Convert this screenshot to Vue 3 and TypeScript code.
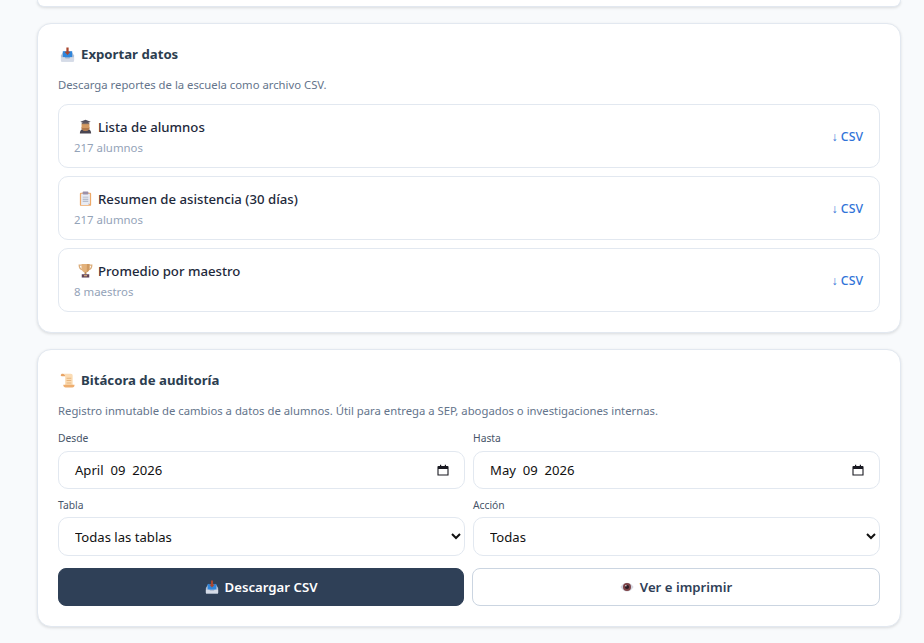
<script setup lang="ts">
type Report = { icon: string; title: string; sub: string }
const reports: Report[] = [
  { icon: 'student', title: 'Lista de alumnos', sub: '217 alumnos' },
  { icon: 'clipboard', title: 'Resumen de asistencia (30 días)', sub: '217 alumnos' },
  { icon: 'trophy', title: 'Promedio por maestro', sub: '8 maestros' },
]
</script>

<template>
  <main class="page">
    <div class="stub"></div>

    <section class="card">
      <h2 class="title">
        <svg class="emoji" viewBox="0 0 16 16"><use href="#i-inbox" /></svg>
        Exportar datos
      </h2>
      <p class="desc">Descarga reportes de la escuela como archivo CSV.</p>
      <div class="rows">
        <div v-for="r in reports" :key="r.title" class="row">
          <div>
            <div class="row-title">
              <svg class="emoji" viewBox="0 0 16 16"><use :href="'#i-' + r.icon" /></svg>
              <span>{{ r.title }}</span>
            </div>
            <div class="row-sub">{{ r.sub }}</div>
          </div>
          <a class="csv">↓ CSV</a>
        </div>
      </div>
    </section>

    <section class="card audit">
      <h2 class="title">
        <svg class="emoji" viewBox="0 0 16 16"><use href="#i-scroll" /></svg>
        Bitácora de auditoría
      </h2>
      <p class="desc">Registro inmutable de cambios a datos de alumnos. Útil para entrega a SEP, abogados o investigaciones internas.</p>
      <div class="form">
        <div class="field">
          <label>Desde</label>
          <div class="control date">
            <span>April&nbsp; 09&nbsp; 2026</span>
            <svg class="cal" viewBox="0 0 12 12"><use href="#i-cal" /></svg>
          </div>
        </div>
        <div class="field">
          <label>Hasta</label>
          <div class="control date">
            <span>May&nbsp; 09&nbsp; 2026</span>
            <svg class="cal" viewBox="0 0 12 12"><use href="#i-cal" /></svg>
          </div>
        </div>
        <div class="field tight">
          <label>Tabla</label>
          <select class="control sel"><option>Todas las tablas</option></select>
        </div>
        <div class="field tight">
          <label>Acción</label>
          <select class="control sel"><option>Todas</option></select>
        </div>
        <div class="actions">
          <button class="btn primary">
            <svg class="emoji" viewBox="0 0 16 16"><use href="#i-inbox" /></svg>
            Descargar CSV
          </button>
          <button class="btn ghost">
            <svg class="emoji" viewBox="0 0 16 16"><use href="#i-eye" /></svg>
            Ver e imprimir
          </button>
        </div>
      </div>
    </section>

    <svg class="defs" aria-hidden="true">
      <defs>
        <symbol id="i-inbox" viewBox="0 0 16 16">
          <path d="M3.500 5h9L15 9v5.500a1 1 0 0 1-1 1H2a1 1 0 0 1-1-1V9z" fill="#b4bfd2" />
          <path d="M3 4.500h10V11H3z" fill="#2f86dc" />
          <path d="M1 11h4l1 1.500h4l1-1.500h4v3.500a1 1 0 0 1-1 1H2a1 1 0 0 1-1-1z" fill="#d5dbe7" />
          <path d="M6.800 .5h2.400v4.500H11.200L8 8.500 4.800 5h2z" fill="#a9472f" />
        </symbol>
        <symbol id="i-student" viewBox="0 0 16 16">
          <path d="M2 15.500c0-3.800 2-5.500 6-5.500s6 1.700 6 5.500z" fill="#4a4652" />
          <path d="M6.500 10.500 8 13l1.500-2.500z" fill="#8b8a98" />
          <path d="M3.800 5h8.400v4.500c0 2-2 3-4.200 3s-4.200-1-4.200-3z" fill="#d49a63" />
          <path d="M3.800 8.500c1 1.800 2.500 1 4.200 1s3.200.8 4.200-1v1.500c-.6 1.600-2.400 2.500-4.200 2.500s-3.600-.9-4.200-2.500z" fill="#b1794c" />
          <path d="M2.500 3 8 .8 13.500 3 8 5.200z" fill="#54505e" />
          <path d="M4 4h8v1.500H4z" fill="#7b6a66" />
        </symbol>
        <symbol id="i-clipboard" viewBox="0 0 16 16">
          <rect x="2" y="1.800" width="12" height="14" rx="1" fill="#eda968" />
          <path d="M3.300 3h9.400v10.500l-2 1.300H3.300z" fill="#e8ebf3" />
          <path d="M10.700 14.800v-1.800h2z" fill="#c9cfdd" />
          <rect x="5" y=".6" width="6" height="3" rx=".7" fill="#9b90a8" />
          <path d="M5 6h6v1H5zM5 8.200h6v1H5zM5 10.400h6v1H5z" fill="#a6aec0" />
        </symbol>
        <symbol id="i-trophy" viewBox="0 0 16 16">
          <path d="M4 2.200H1.300c0 3 1.200 4.600 3.500 5M12 2.200h2.700c0 3-1.200 4.600-3.500 5" fill="none" stroke="#dcae7c" stroke-width="1.400" />
          <path d="M3.700 1h8.600v4c0 3.200-2 5-4.300 5S3.700 8.200 3.700 5z" fill="#e3b27c" />
          <path d="M9.500 1h2.800v4c0 2.500-1.300 4.200-3 4.800z" fill="#cf9a62" />
          <path d="M7 9.500h2V12H7z" fill="#bf8d58" />
          <path d="M4 12h8v3.500H4z" fill="#5f4258" />
          <path d="M6.300 12.900h3.400v1.300H6.300z" fill="#d9ad78" />
        </symbol>
        <symbol id="i-scroll" viewBox="0 0 16 16">
          <path d="M2.500 .8h9c1.300 0 2 .8 2 2v10H5.500V3c0-1.200-1.300-2.200-3-2.200z" fill="#fbdcb4" />
          <path d="M.8 2.500C.8 1.500 1.600.8 2.700.8 4.300.8 5.500 1.800 5.500 3.500H2.500C1.500 3.500.8 3.300.8 2.500z" fill="#e8a465" />
          <path d="M3.500 12.500h12c0 1.800-.8 3-2.300 3H6C4.500 15.500 3.500 14.300 3.500 12.500z" fill="#eeae6f" />
          <path d="M7 5h5v1.100H7zM7 7.500h5v1.100H7zM7 10h5v1.100H7z" fill="#e8b57e" />
        </symbol>
        <symbol id="i-eye" viewBox="0 0 16 16">
          <path d="M.5 8C2.800 4.300 5.300 3 8 3s5.200 1.300 7.500 5C13.200 11.700 10.700 13 8 13S2.800 11.700.5 8z" fill="#d5d7e2" />
          <circle cx="8" cy="8" r="4.600" fill="#7d4347" />
          <circle cx="8" cy="8" r="2.400" fill="#2b1c24" />
          <circle cx="6.700" cy="6.600" r=".9" fill="#e6e4ea" />
        </symbol>
        <symbol id="i-cal" viewBox="0 0 12 12">
          <path d="M1.500 2.500h9a.5.5 0 0 1 .5.500v8H1V3a.5.500 0 0 1 .5-.5z" fill="none" stroke="#1a1a22" stroke-width="1.100" />
          <path d="M1 2.500h10v2.500H1z" fill="#1a1a22" />
          <path d="M3 .8h1.200v2H3zM7.800.8H9v2H7.800z" fill="#1a1a22" />
        </symbol>
      </defs>
    </svg>
  </main>
</template>

<style>
html, body { margin: 0; background: #f8fafc; }
</style>

<style scoped>
.page {
  box-sizing: border-box;
  width: 924px;
  height: 643px;
  overflow: hidden;
  padding: 0 23px 0 37px;
  display: flex;
  flex-direction: column;
  gap: 16px;
  font-family: "Noto Sans", "Open Sans", sans-serif;
  background: #f8fafc;
}
.stub {
  flex: none;
  height: 6px;
  background: #fff;
  border: 1px solid #e2e8f0;
  border-top: none;
  border-radius: 0 0 14px 14px;
  box-shadow: 0 1px 3px rgba(0, 0, 0, .12);
}
.card {
  flex: none;
  box-sizing: border-box;
  height: 310px;
  padding: 20px;
  background: #fff;
  border: 1px solid #e2e8f0;
  border-radius: 14px;
  box-shadow: 0 1px 3px rgba(0, 0, 0, .12);
}
.audit { height: 278px; }
.title {
  display: flex;
  align-items: center;
  gap: 6px;
  height: 20px;
  margin: 0;
  font-size: 13.200px;
  font-weight: 700;
  line-height: 20px;
  color: #2c3e50;
}
.emoji { flex: none; width: 15px; height: 15px; }
.title .emoji { margin-left: 2px; }
.desc {
  margin: 13px 0 11px;
  font-size: 11.300px;
  line-height: 16px;
  color: #64748b;
}
.rows { display: flex; flex-direction: column; gap: 8px; }
.row {
  box-sizing: border-box;
  height: 64px;
  padding: 0 16px 0 15px;
  display: flex;
  align-items: center;
  justify-content: space-between;
  border: 1px solid #e2e8f0;
  border-radius: 10px;
}
.row-title {
  display: flex;
  align-items: center;
  gap: 5px;
  padding-left: 4px;
  font-size: 13.200px;
  font-weight: 500;
  line-height: 20px;
  color: #1e293b;
}
.row-sub {
  margin-top: 3px;
  font-size: 11.400px;
  line-height: 16px;
  color: #94a3b8;
}
.csv {
  font-size: 12.300px;
  font-weight: 500;
  color: #3073d8;
}
.form {
  display: grid;
  grid-template-columns: 1fr 1fr;
  column-gap: 8px;
  row-gap: 8px;
}
.field { display: flex; flex-direction: column; gap: 5px; min-width: 0; }
.field.tight { gap: 4px; }
.field label {
  font-size: 10.300px;
  line-height: 16px;
  color: #475569;
}
.control {
  box-sizing: border-box;
  width: 100%;
  border: 1px solid #e2e8f0;
  border-radius: 10px;
  background: #fff;
  font-family: inherit;
  font-size: 13.100px;
  color: #111;
}
.date {
  height: 38px;
  padding: 0 15px 0 16px;
  display: flex;
  align-items: center;
  justify-content: space-between;
}
.cal { width: 12px; height: 12px; }
.sel { height: 39px; padding: 0 12px; }
.actions {
  grid-column: 1 / -1;
  display: grid;
  grid-template-columns: 406px 408px;
  column-gap: 8px;
  margin-top: 4px;
}
.btn {
  height: 38px;
  display: flex;
  align-items: center;
  justify-content: center;
  gap: 6px;
  border-radius: 8px;
  font-family: inherit;
  font-size: 13.200px;
  font-weight: 600;
}
.btn .emoji { width: 14px; height: 14px; }
.primary { border: 1px solid #2f4057; background: #2f4057; color: #fff; }
.ghost { border: 1px solid #cbd5e1; background: #fff; color: #2f4057; }
.defs { position: absolute; width: 0; height: 0; }
</style>
